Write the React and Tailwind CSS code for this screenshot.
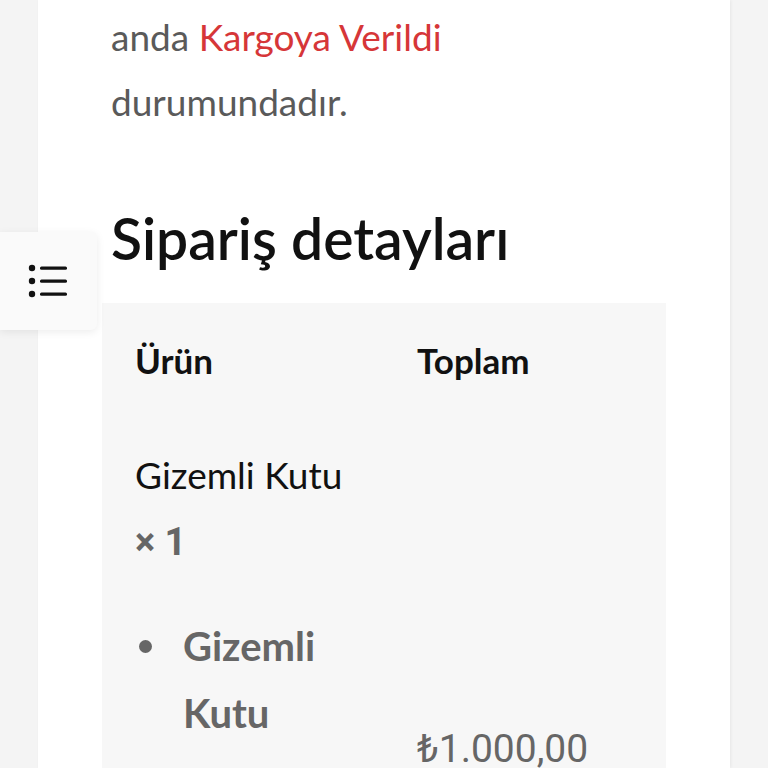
import React from 'react'

const jost = { fontFamily: 'Lato, "Noto Sans", sans-serif' }
const roboto = { fontFamily: 'Roboto, "Noto Sans", sans-serif' }

function ListIcon() {
  return (
    <svg width="40" height="34" viewBox="0 0 40 34" fill="none">
      <circle cx="4" cy="4" r="3.2" fill="#111" />
      <circle cx="4" cy="17" r="3.2" fill="#111" />
      <circle cx="4" cy="30" r="3.2" fill="#111" />
      <rect x="12" y="2.5" width="27" height="3.2" rx="1.5" fill="#111" />
      <rect x="12" y="15.5" width="27" height="3.2" rx="1.5" fill="#111" />
      <rect x="12" y="28.5" width="27" height="3.2" rx="1.5" fill="#111" />
    </svg>
  )
}

export default function App() {
  return (
    <div className="relative h-[768px] w-[768px] overflow-hidden bg-[#f4f4f4]" style={jost}>
      {/* table of contents toggle */}
      <button className="absolute left-0 top-[232px] z-10 flex h-[98px] w-[97px] items-center justify-center rounded-r-[6px] bg-[#fafafa] shadow-[0_2px_8px_rgba(0,0,0,0.08)]">
        <div className="-ml-[2px]"><ListIcon /></div>
      </button>

      <div className="ml-[38px] h-full w-[692px] bg-white pl-[73px] pt-[4px] shadow-[1px_0_3px_rgba(0,0,0,0.06)]">
        <p className="text-[37px] leading-[65px] text-[#5a5a5a]">
          anda <span className="text-[#d63638]">Kargoya Verildi</span>
          <br />
          durumundadır.
        </p>

        <h2 className="mt-[74px] text-[57px] font-semibold leading-[60px] text-[#111]">Sipariş detayları</h2>

        <div className="-ml-[9px] mt-[35px] h-[600px] w-[564px] bg-[#f7f7f7] pl-[33px] pt-[32px]">
          <div className="flex text-[35px] font-bold leading-[50px] text-[#111]">
            <div className="w-[282px]">Ürün</div>
            <div>Toplam</div>
          </div>

          <div className="flex pt-[65px]">
            <div className="w-[282px]">
              <div className="text-[37px] leading-[50px] text-[#111]">Gizemli Kutu</div>
              <div className="mt-[17px] text-[38px] font-bold leading-[50px] text-[#666]" style={roboto}>× 1</div>
              <div className="mt-[46px] flex text-[40px] font-bold leading-[67px] text-[#666]">
                <span className="ml-[4px] mt-[27px] h-[13px] w-[13px] shrink-0 rounded-full bg-[#666]"></span>
                <span className="ml-[31px] w-[150px]">Gizemli Kutu</span>
              </div>
            </div>
            <div className="pt-[274px] text-[39px] leading-[50px] text-[#666]" style={roboto}>₺1.000,00</div>
          </div>
        </div>
      </div>
    </div>
  )
}
